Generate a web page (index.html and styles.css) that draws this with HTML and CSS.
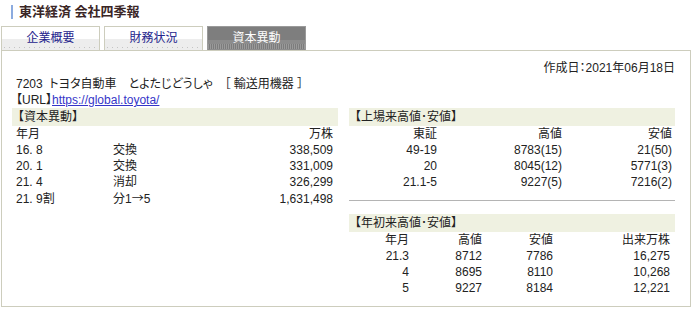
FILE: index.html
```html
<!DOCTYPE html>
<html lang="ja">
<head>
  <meta charset="UTF-8">
  <meta name="viewport" content="width=device-width, initial-scale=1.0">
  <title>東洋経済 会社四季報 | 資本異動</title>
  <link rel="stylesheet" href="styles.css">
</head>
<body>

  <h1 class="brand">東洋経済 会社四季報</h1>

  <ul class="tabs">
    <li class="tab">企業概要</li>
    <li class="tab">財務状況</li>
    <li class="tab active">資本異動</li>
  </ul>

  <div class="sheet">
    <p class="made">作成日：2021年06月18日</p>
    <p class="company">7203&nbsp; トヨタ自動車　とよたじどうしゃ　［ 輸送用機器 ］</p>
    <p class="url">【URL】<a href="https://global.toyota/">https://global.toyota/</a></p>

    <div class="cols">
      <section class="panel">
        <h2 class="head">【資本異動】</h2>
        <table class="grid capital">
          <colgroup><col class="c1"><col class="c2"><col></colgroup>
          <tr><td>年月</td><td></td><td class="r">万株</td></tr>
          <tr><td>16. 8</td><td>交換</td><td class="r">338,509</td></tr>
          <tr><td>20. 1</td><td>交換</td><td class="r">331,009</td></tr>
          <tr><td>21. 4</td><td>消却</td><td class="r">326,299</td></tr>
          <tr><td>21. 9割</td><td>分1<span class="arrow">→</span>5</td><td class="r">1,631,498</td></tr>
        </table>
      </section>

      <section class="panel">
        <h2 class="head">【上場来高値･安値】</h2>
        <table class="grid alltime">
          <colgroup><col class="c1"><col class="c2"><col class="c3"></colgroup>
          <tr><td>東証</td><td>高値</td><td>安値</td></tr>
          <tr><td>49-19</td><td>8783(15)</td><td>21(50)</td></tr>
          <tr><td>20</td><td>8045(12)</td><td>5771(3)</td></tr>
          <tr><td>21.1-5</td><td>9227(5)</td><td>7216(2)</td></tr>
        </table>

        <hr class="rule">

        <h2 class="head">【年初来高値･安値】</h2>
        <table class="grid ytd">
          <colgroup><col class="c1"><col class="c2"><col class="c3"><col class="c4"></colgroup>
          <tr><td>年月</td><td>高値</td><td>安値</td><td>出来万株</td></tr>
          <tr><td>21.3</td><td>8712</td><td>7786</td><td>16,275</td></tr>
          <tr><td>4</td><td>8695</td><td>8110</td><td>10,268</td></tr>
          <tr><td>5</td><td>9227</td><td>8184</td><td>12,221</td></tr>
        </table>
      </section>
    </div>
  </div>

</body>
</html>
```

FILE: styles.css
```css
* {
  margin: 0;
  padding: 0;
  box-sizing: border-box;
}
body {
  font-family: 'Liberation Sans', 'Noto Sans CJK JP', sans-serif;
  font-size: 12px;
  color: #222;
  background: #fff;
  font-feature-settings: "palt";
}

/* title */
.brand {
  margin: 5px 0 0 11px;
  padding-left: 6px;
  border-left: 2px solid #8cabdf;
  height: 14px;
  line-height: 14px;
  font-size: 13px;
  font-weight: bold;
  color: #3a2626;
}

/* tabs */
.tabs {
  display: flex;
  gap: 4px;
  margin: 7px 0 0 1px;
  list-style: none;
}
.tab {
  width: 99px;
  height: 24px;
  border: 1px solid #cdcdbd;
  border-bottom: none;
  text-align: center;
  line-height: 23px;
  font-size: 12px;
  color: #24248c;
  background:
    repeating-linear-gradient(to right, #c4c4c4 0 1px, transparent 1px 5px) left 2px bottom 2px / 100% 1px no-repeat,
    linear-gradient(#fff 50%, #ededed 50%);
}
.tab.active {
  border-color: #9a9a9a;
  color: #fff;
  background:
    repeating-linear-gradient(to right, #9a9a9a 0 1px, #7c7c7c 1px 2px) left bottom 1px / 100% 5px no-repeat,
    linear-gradient(#7e7e7e 55%, #8c8c8c 55%);
}

/* content box */
.sheet {
  margin-left: 1px;
  width: 690px;
  height: 257px;
  border: 1px solid #cdcdbd;
  padding: 9px 14px 0 10px;
}
.made {
  text-align: right;
  line-height: 16px;
  padding-right: 1px;
}
.company, .url {
  line-height: 16px;
  padding-left: 4px;
}
.url a {
  color: #3535c8;
  text-decoration: underline;
}

.cols {
  display: flex;
  gap: 11px;
}
.panel {
  width: 326px;
}
.head {
  background: #eff1e1;
  font-size: 12px;
  font-weight: normal;
  height: 18px;
  line-height: 18px;
  font-feature-settings: normal;
}

.grid {
  border-collapse: collapse;
  table-layout: fixed;
}
.grid td {
  padding: 0;
  height: 16px;
  line-height: 16px;
  white-space: nowrap;
}
.arrow {
  font-family: 'Noto Sans CJK JP', sans-serif;
  font-feature-settings: normal;
}

.capital {
  width: 100%;
}
.capital .c1 { width: 101px; }
.capital td:first-child { padding-left: 4px; }
.capital .r {
  text-align: right;
  padding-right: 5px;
}

.alltime td, .ytd td {
  text-align: right;
}
.alltime { width: 323px; }
.alltime .c1 { width: 88px; }
.alltime .c2 { width: 125px; }
.alltime .c3 { width: 110px; }

.rule {
  border: none;
  border-top: 1px solid #b4b4b4;
  margin: 10px 0 13px;
}

.ytd { width: 321px; }
.ytd .c1 { width: 60px; }
.ytd .c2 { width: 73px; }
.ytd .c3 { width: 71px; }
.ytd .c4 { width: 117px; }
```
